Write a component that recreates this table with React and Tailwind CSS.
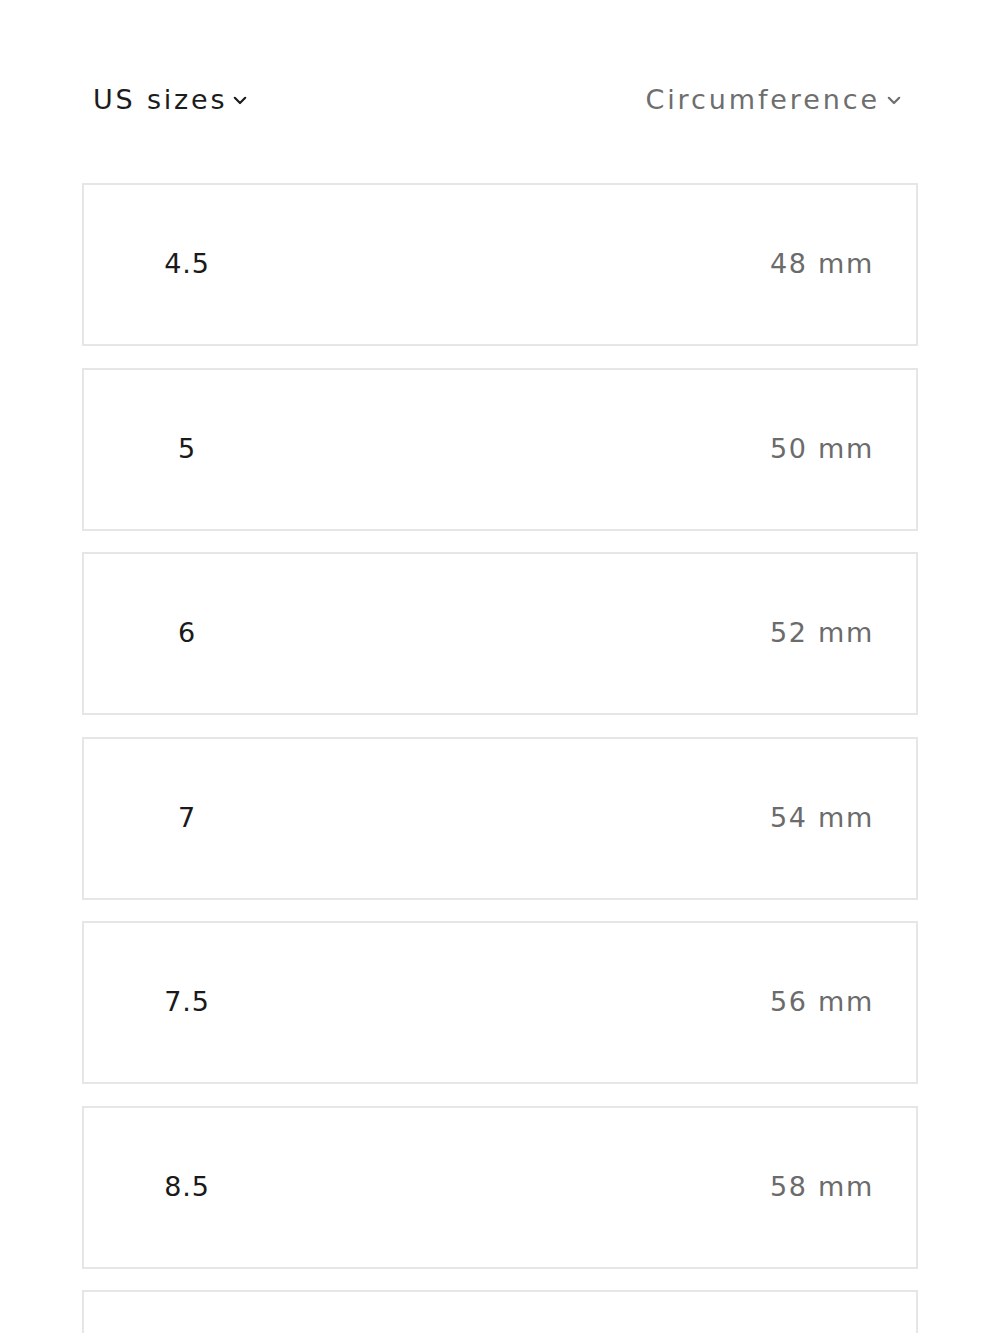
import React from "react";

const rows = [
  ["4.5", "48 mm"],
  ["5", "50 mm"],
  ["6", "52 mm"],
  ["7", "54 mm"],
  ["7.5", "56 mm"],
  ["8.5", "58 mm"],
  ["", ""],
];

function Chevron({ className }) {
  return (
    <svg viewBox="0 0 14 9" className={className} fill="none" stroke="currentColor" strokeWidth="2.2" strokeLinecap="round" strokeLinejoin="round">
      <path d="M1.8 1.8 L7 7 L12.2 1.8" />
    </svg>
  );
}

export default function App() {
  return (
    <div className="w-[1000px] h-[1333px] overflow-hidden bg-white" style={{ fontFamily: '"DejaVu Sans", "Noto Sans", sans-serif' }}>
      <div className="flex items-center justify-between pt-[80px] pl-[93px] pr-[99px] h-[120px]">
        <div className="flex items-center gap-[6px] text-[27px] tracking-[2.8px] text-[#1c1c1c]">
          <span>US sizes</span>
          <Chevron className="w-[14px] h-[9px] text-[#1c1c1c]" />
        </div>
        <div className="flex items-center gap-[7px] text-[27px] tracking-[2.9px] text-[#6e6e6e]">
          <span>Circumference</span>
          <Chevron className="w-[14px] h-[9px] text-[#6e6e6e]" />
        </div>
      </div>
      <div className="flex flex-col gap-[21.5px] mt-[63px] mx-[82px]">
        {rows.map(([s, c], i) => (
          <div key={i} className="h-[163px] shrink-0 border-2 border-[#e6e6e6] flex items-center justify-between pr-[42px]">
            <div className="w-[206px] text-center text-[27px] text-[#1a1a1a] tracking-[0.8px]">{s}</div>
            <div className="text-[27px] text-[#6b6b6b] tracking-[1.7px]">{c}</div>
          </div>
        ))}
      </div>
    </div>
  );
}
